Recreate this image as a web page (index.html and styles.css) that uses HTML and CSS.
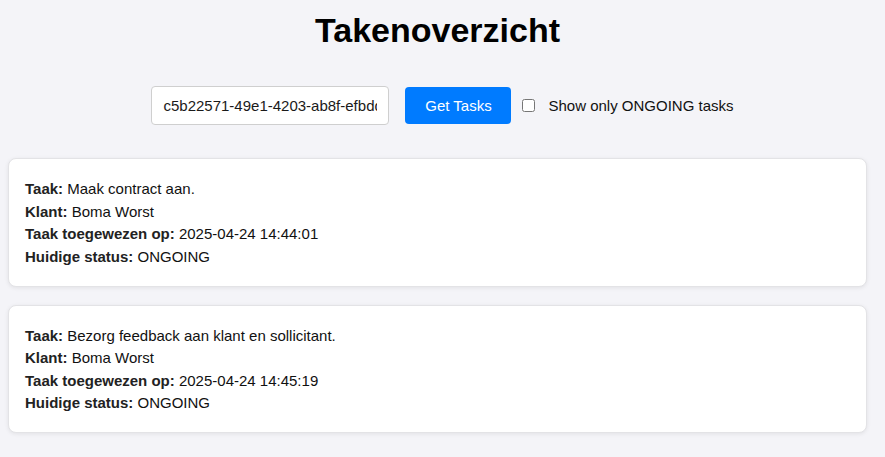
FILE: index.html
```html
<!DOCTYPE html>
<html lang="nl">
<head>
<meta charset="utf-8">
<title>Takenoverzicht</title>
<link rel="stylesheet" href="styles.css">
</head>
<body>
<div class="page">
  <h1 class="title">Takenoverzicht</h1>
  <div class="controls">
    <input class="id-input" type="text" value="c5b22571-49e1-4203-ab8f-efbdd9a3c2e1">
    <button class="btn" type="button">Get Tasks</button>
    <input class="check" type="checkbox" id="ongoing">
    <label class="check-label" for="ongoing">Show only ONGOING tasks</label>
  </div>
  <div class="tasks">
    <div class="card">
      <div class="line"><b>Taak:</b> Maak contract aan.</div>
      <div class="line"><b>Klant:</b> Boma Worst</div>
      <div class="line"><b>Taak toegewezen op:</b> 2025-04-24 14:44:01</div>
      <div class="line"><b>Huidige status:</b> ONGOING</div>
    </div>
    <div class="card">
      <div class="line"><b>Taak:</b> Bezorg feedback aan klant en sollicitant.</div>
      <div class="line"><b>Klant:</b> Boma Worst</div>
      <div class="line"><b>Taak toegewezen op:</b> 2025-04-24 14:45:19</div>
      <div class="line"><b>Huidige status:</b> ONGOING</div>
    </div>
  </div>
</div>
</body>
</html>
```
FILE: styles.css
```css
html, body {
  margin: 0;
  padding: 0;
  background: #f4f4f8;
}
body {
  font-family: "Liberation Sans", Arial, sans-serif;
  color: #111;
}
.page {
  padding: 11px 18px 20px 8px;
}
.title {
  margin: 0;
  font-size: 34px;
  line-height: 38px;
  font-weight: bold;
  text-align: center;
  color: #000;
}
.controls {
  margin-top: 37px;
  display: flex;
  justify-content: center;
  align-items: center;
  padding-left: 10px;
}
.id-input {
  box-sizing: border-box;
  width: 238px;
  height: 39px;
  margin: 0;
  padding: 0 11px;
  border: 1px solid #cfcfcf;
  border-radius: 4px;
  background: #fff;
  font-family: "Liberation Sans", Arial, sans-serif;
  font-size: 15px;
  color: #1a1a1a;
  outline: none;
}
.btn {
  box-sizing: border-box;
  width: 106px;
  height: 37px;
  margin: 0 0 0 16px;
  padding: 0;
  border: none;
  border-radius: 4px;
  background: #007bff;
  color: #fff;
  font-family: "Liberation Sans", Arial, sans-serif;
  font-size: 15px;
}
.check {
  width: 13px;
  height: 13px;
  margin: 0 0 1px 11px;
}
.check-label {
  margin-left: 13px;
  font-size: 15px;
  color: #111;
}
.tasks {
  margin-top: 33px;
  display: flex;
  flex-direction: column;
  gap: 18px;
}
.card {
  background: #fff;
  border: 1px solid #e3e3e6;
  border-radius: 8px;
  box-shadow: 0 1px 4px rgba(0, 0, 0, 0.08);
  padding: 19px 16px 17.5px;
}
.line {
  font-size: 15px;
  line-height: 22.5px;
  color: #111;
}
.line b {
  color: #222;
}
```
